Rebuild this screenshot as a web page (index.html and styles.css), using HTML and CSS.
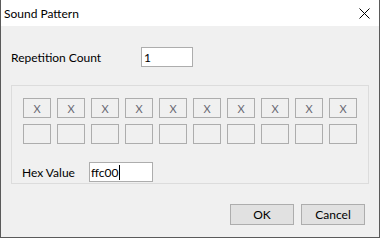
FILE: index.html
```html
<!DOCTYPE html>
<html lang="en">
<head>
  <meta charset="UTF-8">
  <title>Sound Pattern</title>
  <link rel="stylesheet" href="styles.css">
</head>
<body>

  <!-- Dialog window -->
  <div class="dialog">
    <div class="titlebar">
      <span class="title">Sound Pattern</span>
      <span class="close">
        <svg width="11" height="11" viewBox="0 0 11 11">
          <path d="M0.5 0.5 L10.5 10.5 M10.5 0.5 L0.5 10.5" stroke="#000" stroke-width="1" fill="none"/>
        </svg>
      </span>
    </div>

    <div class="content">
      <div class="count-row">
        <span class="label count-label">Repetition Count</span>
        <div class="textbox count-box">1</div>
      </div>

      <!-- Pattern cells -->
      <div class="pattern">
        <div class="cells">
          <div class="cell">X</div>
          <div class="cell">X</div>
          <div class="cell">X</div>
          <div class="cell">X</div>
          <div class="cell">X</div>
          <div class="cell">X</div>
          <div class="cell">X</div>
          <div class="cell">X</div>
          <div class="cell">X</div>
          <div class="cell">X</div>
          <div class="cell"></div>
          <div class="cell"></div>
          <div class="cell"></div>
          <div class="cell"></div>
          <div class="cell"></div>
          <div class="cell"></div>
          <div class="cell"></div>
          <div class="cell"></div>
          <div class="cell"></div>
          <div class="cell"></div>
        </div>
        <div class="hex-row">
          <span class="label hex-label">Hex Value</span>
          <div class="textbox hex-box">ffc00<span class="caret"></span></div>
        </div>
      </div>

      <div class="buttons">
        <button class="btn">OK</button>
        <button class="btn">Cancel</button>
      </div>
    </div>
  </div>

</body>
</html>
```

FILE: styles.css
```css
* {
  box-sizing: border-box;
  margin: 0;
  padding: 0;
}

body {
  font-family: Lato, "Liberation Sans", Arial, sans-serif;
  font-size: 12px;
  color: #000;
  background: #f0f0f0;
}

.dialog {
  width: 380px;
  height: 238px;
  border: 1px solid #5a5a5a;
  border-top: none;
  background: #f0f0f0;
}

/* Title bar */
.titlebar {
  height: 26px;
  background: #fff;
  display: flex;
  align-items: center;
  justify-content: space-between;
  padding-left: 3px;
}

.title {
  font-size: 12px;
}

.close {
  display: flex;
  margin-right: 9px;
}

.content {
  padding: 0 10px;
}

/* Repetition count */
.count-row {
  display: flex;
  align-items: center;
  margin-top: 21px;
}

.label {
  display: block;
}

.count-label {
  width: 130px;
}

.textbox {
  height: 20px;
  background: #fff;
  border: 1px solid #adadad;
  display: flex;
  align-items: center;
}

.count-box {
  width: 52px;
  padding-left: 2px;
}

/* Pattern group */
.pattern {
  margin-top: 18px;
  border: 1px solid #dcdcdc;
  padding: 12px 10px 1px 10px;
}

.cells {
  display: grid;
  grid-template-columns: repeat(10, 28px);
  grid-auto-rows: 20px;
  gap: 6px;
  margin-left: 1px;
}

.cell {
  border: 1px solid #adadad;
  display: flex;
  align-items: center;
  justify-content: center;
  color: #6a6a74;
  font-size: 11px;
}

.hex-row {
  display: flex;
  align-items: center;
  margin-top: 18px;
}

.hex-label {
  width: 67px;
}

.hex-box {
  width: 64px;
  padding-left: 1px;
}

.caret {
  display: inline-block;
  width: 1px;
  height: 15px;
  background: #000;
  margin-left: 1px;
}

/* Dialog buttons */
.buttons {
  display: flex;
  justify-content: flex-end;
  gap: 7px;
  margin-top: 20px;
  padding-right: 4px;
}

.btn {
  width: 64px;
  height: 21px;
  font-family: inherit;
  font-size: 12px;
  color: #000;
  background: #e1e1e1;
  border: 1px solid #adadad;
}
```
